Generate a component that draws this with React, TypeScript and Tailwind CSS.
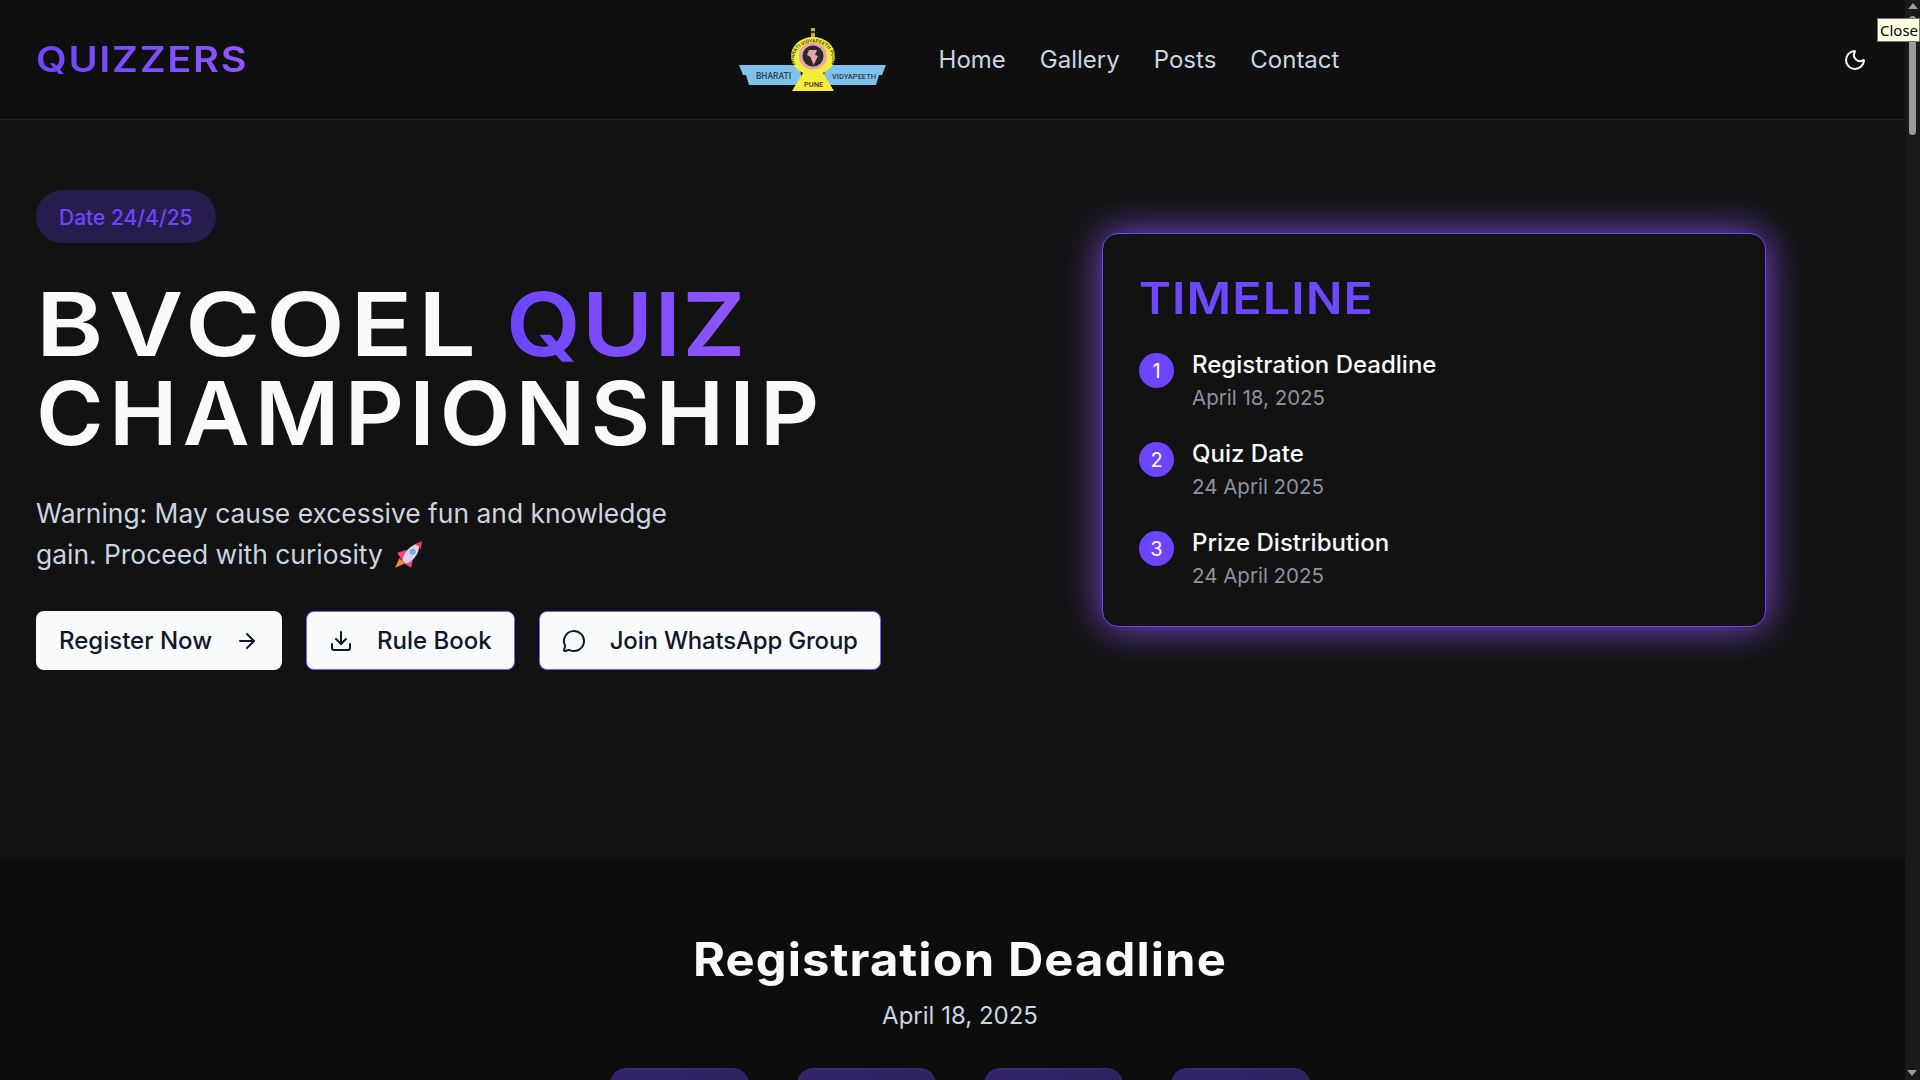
import { ArrowRight, Download, MessageCircle, Moon } from "lucide-react";

const timeline = [
  { n: 1, title: "Registration Deadline", date: "April 18, 2025" },
  { n: 2, title: "Quiz Date", date: "24 April 2025" },
  { n: 3, title: "Prize Distribution", date: "24 April 2025" },
];

function CollegeLogo() {
  return (
    <svg width="147" height="66" viewBox="0 0 147 66">
      <path d="M0 38H60L64 58H10L7 48H4Z" fill="#7fc1ec" />
      <path d="M147 38H87L83 58H137L140 48H143Z" fill="#7fc1ec" />
      <text x="17" y="52" fontSize="8.5" fontWeight="500" fill="#27404f" fontFamily="Roboto, sans-serif">BHARATI</text>
      <text x="93" y="52" fontSize="7.5" fontWeight="500" fill="#27404f" fontFamily="Roboto, sans-serif">VIDYAPEETH</text>
      <rect x="72" y="1" width="4" height="10" fill="#c9b23a" />
      <rect x="72" y="4" width="4" height="2" fill="#333" />
      <path d="M64 46H84L95 64H53Z" fill="#f7ec3a" />
      <ellipse cx="74" cy="29" rx="22" ry="19" fill="#f7ec3a" />
      <path id="ring" d="M56 38A19 17 0 1 1 92 38" fill="none" />
      <text fontSize="5" fontWeight="500" fill="#333" fontFamily="Roboto, sans-serif">
        <textPath href="#ring">BHARATI VIDYAPEETH POONA</textPath>
      </text>
      <ellipse cx="74" cy="29" rx="14" ry="13.5" fill="#e7a4ab" />
      <ellipse cx="74" cy="29" rx="10.5" ry="10.5" fill="#2a2a2a" />
      <path d="M70 23L78 23L76 28L79 29L74.5 38L71.5 30L68 28Z" fill="#eba3ad" />
      <text x="65" y="60" fontSize="7.5" fontWeight="500" fill="#333" fontFamily="Roboto, sans-serif">PUNE</text>
    </svg>
  );
}

function Rocket() {
  return (
    <svg width="30" height="28" viewBox="0 0 28 26" className="inline-block align-[-5px] ml-1">
      <path d="M1 25L5 16L10 21Z" fill="#f28c2c" />
      <path d="M3 11L12 8L8 19Z" fill="#f0487a" />
      <path d="M18 15L16 25L8 20Z" fill="#f0487a" />
      <path d="M8 19C8 11 15 4 23 2C25 9 20 17 12 21Z" fill="#dcd3e6" />
      <path d="M20 3L26 0L25 8C24 6 22 4 20 3Z" fill="#ee3f60" />
      <circle cx="17.5" cy="10" r="2.8" fill="#6aa9ea" />
    </svg>
  );
}

export default function App() {
  return (
    <div className="relative w-[1920px] h-screen overflow-hidden bg-[#121212] font-[Inter,sans-serif]">
      <nav className="h-[120px] flex items-center justify-between pl-9 pr-[45px] bg-[#0f0f0f] border-b border-[#222222]">
        <div className="w-[207px]">
          <span className="inline-block origin-left scale-x-[1.135] text-[35px] leading-none font-semibold tracking-[1.5px] bg-gradient-to-r from-[#6d45ff] to-[#9055ff] bg-clip-text text-transparent">
            QUIZZERS
          </span>
        </div>
        <div className="flex items-center">
          <CollegeLogo />
          <ul className="flex gap-[34px] ml-[53px] text-2xl text-[#cbd5e1]">
            <li>Home</li>
            <li>Gallery</li>
            <li>Posts</li>
            <li>Contact</li>
          </ul>
        </div>
        <button className="w-10 h-10 flex items-center justify-center text-[#f8fafc]">
          <Moon size={24} />
        </button>
      </nav>

      <section className="h-[740px] pt-[70px] pl-9 pr-[154px] flex justify-between items-start">
        <div>
          <div className="inline-block px-[23px] pt-[13px] pb-[11px] rounded-full bg-[#271d4d] text-[#6d45ff] text-[21px] leading-[29px] font-medium">
            Date 24/4/25
          </div>
          <h1 className="mt-[37px] text-[88px] leading-[89px] font-semibold text-[#f8fafc] whitespace-nowrap">
            <span className="inline-block w-[470px] origin-left scale-x-[1.16] tracking-[5px]">BVCOEL</span>
            <span className="inline-block origin-left scale-x-[1.1] tracking-[1px] bg-gradient-to-r from-[#6d45ff] to-[#9055ff] bg-clip-text text-transparent">QUIZ</span>
            <br />
            <span className="inline-block origin-left scale-x-[1.044] tracking-[5px]">CHAMPIONSHIP</span>
          </h1>
          <p className="mt-[35px] w-[672px] text-[26.4px] leading-[41px] text-[#cbd5e1]">
            Warning: May cause excessive fun and knowledge gain. Proceed with curiosity <Rocket />
          </p>
          <div className="mt-9 flex gap-6">
            <button className="h-[59px] px-[23px] flex items-center gap-[23px] rounded-lg bg-[#f8fafc] text-[#0f172a] text-2xl font-medium">
              Register Now
              <ArrowRight size={24} />
            </button>
            <button className="h-[59px] px-[22px] flex items-center gap-6 rounded-lg bg-[#f8fafc] border-[1.5px] border-[#7c5cff] text-[#0f172a] text-2xl font-medium">
              <Download size={24} />
              Rule Book
            </button>
            <button className="h-[59px] px-[22px] flex items-center gap-6 rounded-lg bg-[#f8fafc] border-[1.5px] border-[#7c5cff] text-[#0f172a] text-2xl font-medium tracking-[-0.2px]">
              <MessageCircle size={24} />
              Join WhatsApp Group
            </button>
          </div>
        </div>

        <div className="mt-[43px] w-[664px] h-[394px] p-9 rounded-2xl bg-[#121212] border border-[#6d45ff] shadow-[0_0_40px_rgba(130,76,222,1)]">
          <h2 className="text-[44px] leading-[56px] font-semibold text-[#6f47ff] tracking-[1px]">
            <span className="inline-block origin-left scale-x-[1.1]">TIMELINE</span>
          </h2>
          <div className="mt-[23px] flex flex-col gap-[26px]">
            {timeline.map((item) => (
              <div key={item.n} className="flex gap-[18px]">
                <div className="mt-1 w-[35px] h-[35px] rounded-full bg-[#6d45ff] flex items-center justify-center text-white text-xl">
                  {item.n}
                </div>
                <div>
                  <div className="text-2xl leading-8 font-medium text-[#f8fafc]">{item.title}</div>
                  <div className="mt-[3px] text-[20.5px] leading-7 text-[#8b93a1]">{item.date}</div>
                </div>
              </div>
            ))}
          </div>
        </div>
      </section>

      <section className="h-[300px] pt-[71px] bg-[#0d0d0d] text-center">
        <h2 className="text-[46px] leading-[56px] font-bold text-[#f8fafc] tracking-[1px]">
          <span className="inline-block scale-x-[1.064]">Registration Deadline</span>
        </h2>
        <p className="mt-[13px] text-2xl text-[#cbd5e1]">April 18, 2025</p>
        <div className="mt-[36px] flex justify-center gap-12">
          {["days", "hours", "minutes", "seconds"].map((k) => (
            <div key={k} className="w-[139px] h-[120px] rounded-2xl bg-gradient-to-br from-[#33246b] to-[#2a2158] border border-[#3a2c78]" />
          ))}
        </div>
      </section>

      {/* browser scrollbar + tooltip sit over the page */}
      <div className="absolute top-0 right-0 w-[15px] h-full bg-[#1a1a1a]">
        <div className="mx-auto mt-[3px] w-0 h-0 border-x-[5px] border-x-transparent border-b-[6px] border-b-[#9a9a9a]" />
        <div className="mx-auto mt-[7px] w-[7px] h-[119px] rounded-full bg-[#9a9a9a]" />
        <div className="absolute bottom-[4px] left-[2px] w-0 h-0 border-x-[5px] border-x-transparent border-t-[6px] border-t-[#9a9a9a]" />
      </div>
      <div className="absolute top-[18px] left-[1877px] w-[43px] h-6 bg-[#ffffe1] border border-[#767676] text-black text-[15px] leading-[22px] pl-[2px] font-['Noto_Sans',sans-serif]">
        Close
      </div>
    </div>
  );
}
